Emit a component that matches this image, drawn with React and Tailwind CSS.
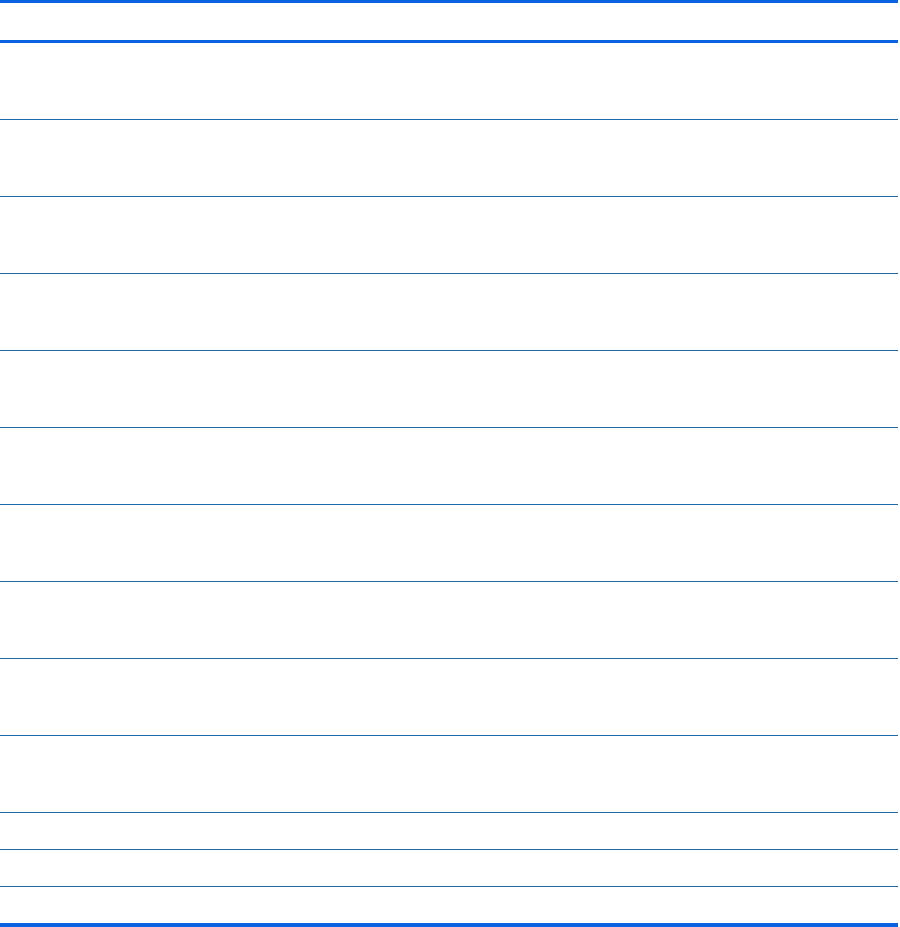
import React from 'react';

const tallRows = Array.from({ length: 10 });
const shortRows = Array.from({ length: 3 });

export default function App() {
  return (
    <div className="w-[900px] h-[927px] bg-white overflow-hidden" style={{ fontFamily: '"Liberation Sans", Arial, sans-serif' }}>
      <div className="w-[898px] flex flex-col">
        {/* cabecera */}
        <div className="h-[43px] border-t-[3px] border-b-[3px] border-[#0a63e0]" />
        {tallRows.map((_, i) => (
          <div key={i} className="h-[77px] border-b border-[#1f6aa9]" />
        ))}
        {shortRows.map((_, i) => (
          <div
            key={i}
            className={i === shortRows.length - 1 ? 'h-[36px]' : 'h-[37px] border-b border-[#1f6aa9]'}
          />
        ))}
        <div className="h-[5px] bg-[#0a63e0]" />
      </div>
    </div>
  );
}
